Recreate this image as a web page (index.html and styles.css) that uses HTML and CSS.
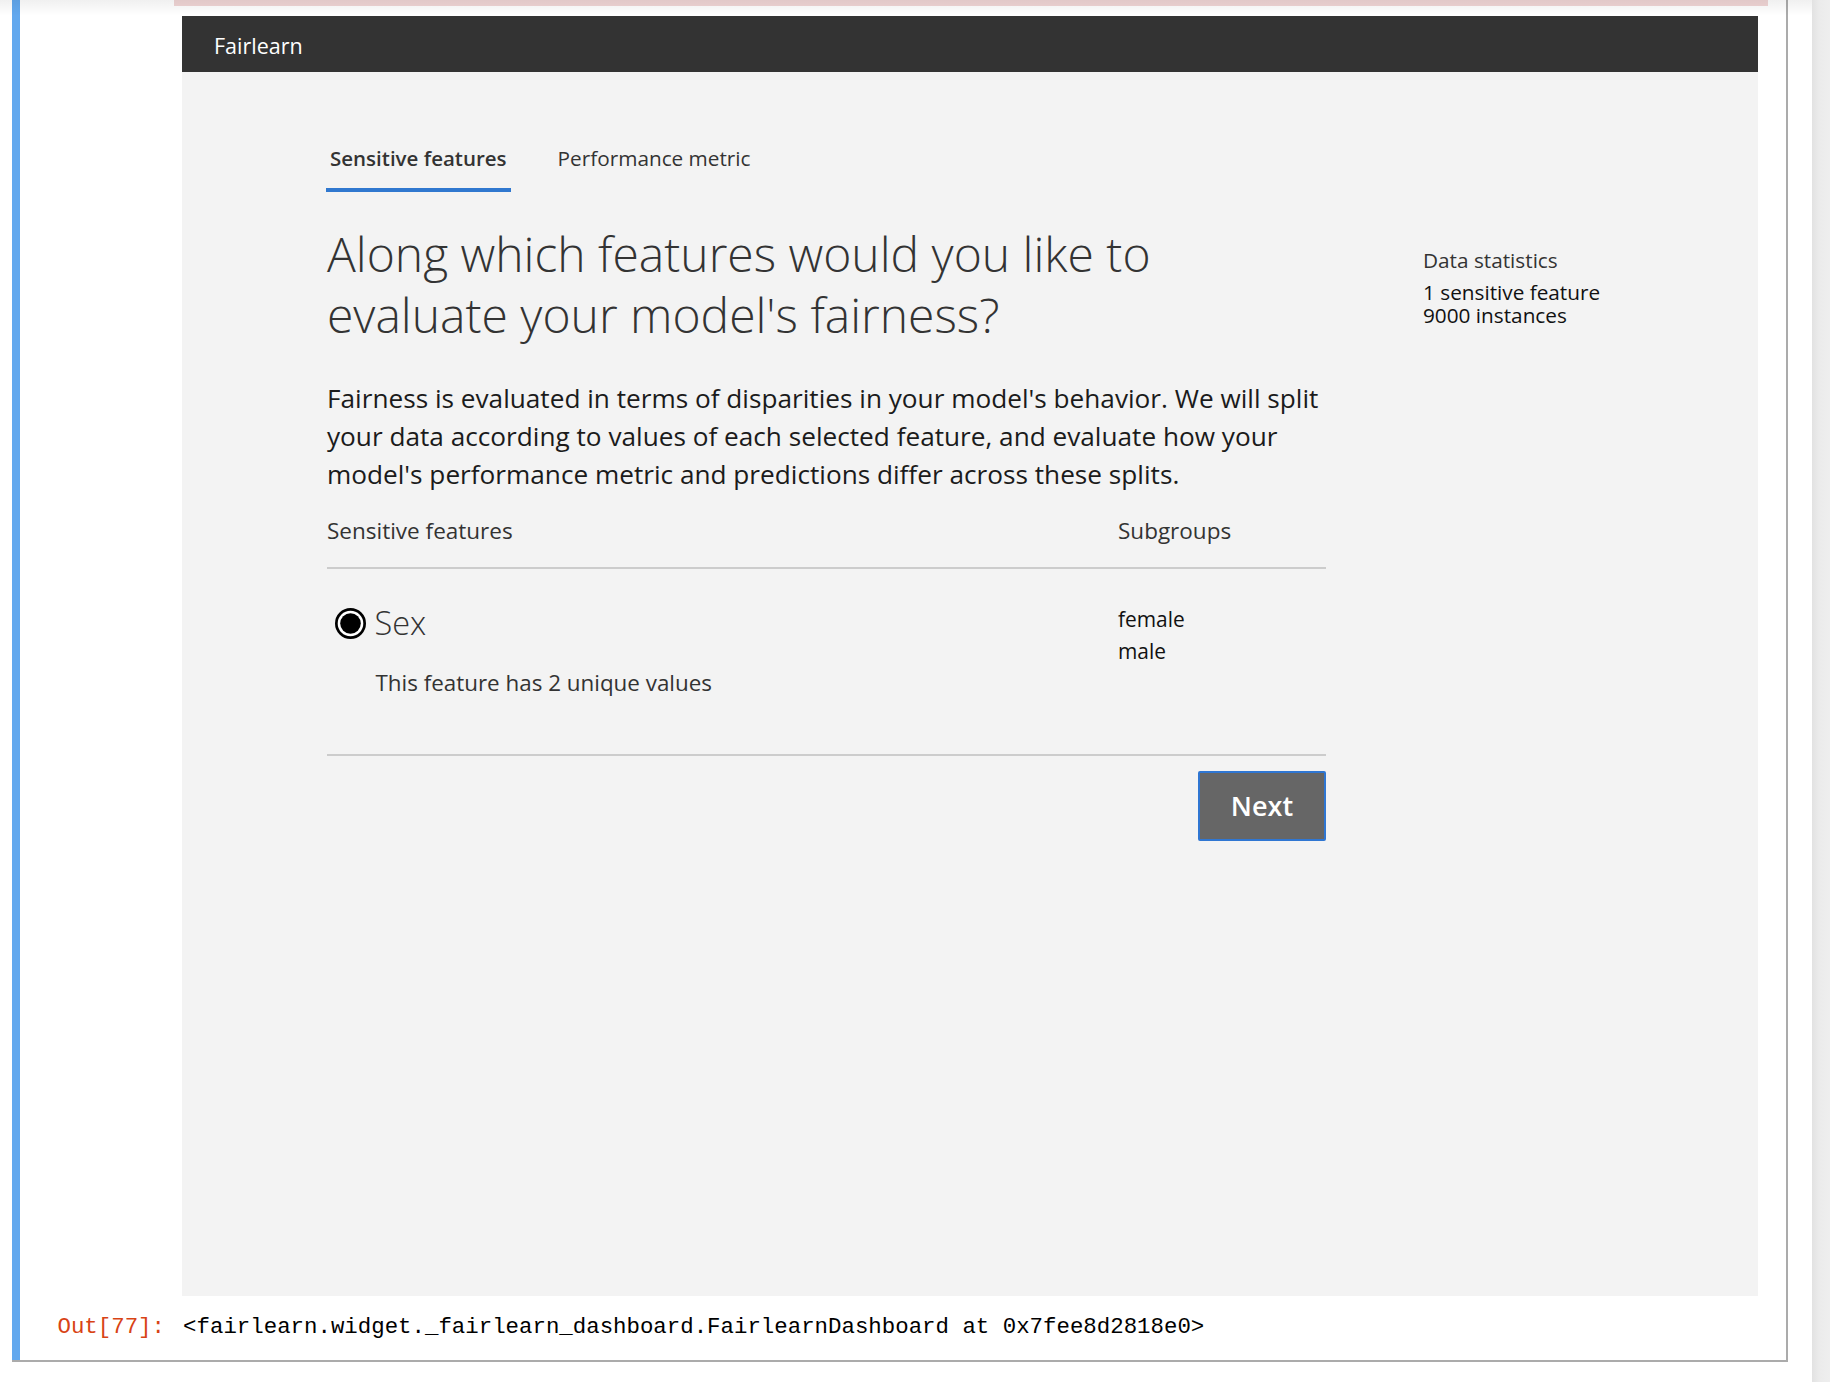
FILE: index.html
```html
<!DOCTYPE html>
<html lang="en">
<head>
<meta charset="utf-8">
<title>Fairlearn dashboard</title>
<link rel="stylesheet" href="styles.css">
</head>
<body>
<div class="topshade"></div>
<div class="page">
  <div class="cell">
    <div class="stderr"></div>
    <div class="widget">
      <div class="appbar">Fairlearn</div>
      <div class="panel">
        <div class="tabs">
          <div class="tab active">Sensitive features</div>
          <div class="tab">Performance metric</div>
        </div>
        <div class="body">
          <div class="main">
            <h1 class="title">Along which features would you like to evaluate your model's fairness?</h1>
            <p class="desc">Fairness is evaluated in terms of disparities in your model's behavior. We will split your data according to values of each selected feature, and evaluate how your model's performance metric and predictions differ across these splits.</p>
            <div class="table-head">
              <span>Sensitive features</span>
              <span>Subgroups</span>
            </div>
            <div class="row">
              <div class="feat">
                <div class="radio-line">
                  <svg class="radio" width="31" height="31" viewBox="0 0 31 31" aria-hidden="true">
                    <circle cx="15.5" cy="15.5" r="14.15" fill="#ffffff" stroke="#000000" stroke-width="2.7"/>
                    <circle cx="15.5" cy="15.5" r="10.3" fill="#000000"/>
                  </svg>
                  <span class="feat-name">Sex</span>
                </div>
                <div class="uniq">This feature has 2 unique values</div>
              </div>
              <div class="groups">
                <div>female</div>
                <div>male</div>
              </div>
            </div>
            <div class="actions">
              <button class="next" type="button">Next</button>
            </div>
          </div>
          <aside class="stats">
            <div class="stats-title">Data statistics</div>
            <div class="stats-line">1 sensitive feature</div>
            <div class="stats-line">9000 instances</div>
          </aside>
        </div>
      </div>
    </div>
    <div class="out">
      <div class="prompt">Out[77]:</div>
      <div class="out-text">&lt;fairlearn.widget._fairlearn_dashboard.FairlearnDashboard at 0x7fee8d2818e0&gt;</div>
    </div>
  </div>
</div>
<div class="scrollbar"></div>
</body>
</html>
```
FILE: styles.css
```css
html, body {
  margin: 0;
  padding: 0;
}
body {
  display: flex;
  width: 1830px;
  height: 1382px;
  overflow: hidden;
  background: #ffffff;
  font-family: "Open Sans", "Noto Sans", sans-serif;
  position: relative;
}
.topshade {
  position: absolute;
  top: 0;
  left: 0;
  width: 1812px;
  height: 16px;
  background: linear-gradient(rgba(0, 0, 0, 0.06), rgba(0, 0, 0, 0));
  pointer-events: none;
  z-index: 2;
}
.page {
  width: 1812px;
  flex: none;
}
.scrollbar {
  width: 18px;
  height: 1382px;
  flex: none;
  background: linear-gradient(to right, #e2e2e2, #ebebeb 40%, #eeeeee);
}
.cell {
  margin-left: 12px;
  width: 1776px;
  box-sizing: border-box;
  border-right: 2px solid #ababab;
  border-bottom: 2px solid #ababab;
  box-shadow: inset 8px 0 0 #62a8ee;
  padding-bottom: 20px;
}
.stderr {
  margin-left: 162px;
  width: 1594px;
  height: 6px;
  background: #f0d5d5;
}
.widget {
  margin: 10px 0 0 170px;
  width: 1576px;
}
.appbar {
  height: 56px;
  background: #333333;
  color: #ffffff;
  font-size: 21.5px;
  font-weight: 400;
  line-height: 60px;
  padding-left: 32px;
  overflow: hidden;
}
.panel {
  height: 1224px;
  box-sizing: border-box;
  background: #f3f3f3;
  padding: 66px 0 0 145px;
}
.tabs {
  display: flex;
  gap: 43px;
  margin-left: -1px;
}
.tab {
  font-size: 20.75px;
  line-height: 40px;
  color: #333333;
  padding: 0 4px 10px;
  border-bottom: 4px solid transparent;
}
.tab.active {
  font-size: 20.5px;
  font-weight: 600;
  border-bottom-color: #3078cf;
}
.body {
  display: flex;
}
.main {
  width: 999px;
  flex: none;
}
.title {
  max-width: 960px;
  margin: 30.5px 0 0;
  font-size: 48px;
  font-weight: 300;
  line-height: 61px;
  color: #333333;
}
.desc {
  margin: 34.5px 0 0;
  font-size: 26.2px;
  line-height: 38px;
  color: #1b1b1b;
}
.table-head {
  margin-top: 22.5px;
  display: grid;
  grid-template-columns: 791px 1fr;
  font-size: 22.5px;
  line-height: 30px;
  color: #333333;
  padding-bottom: 21.5px;
  border-bottom: 2px solid #cccccc;
}
.row {
  display: grid;
  grid-template-columns: 791px 1fr;
  border-bottom: 2px solid #cccccc;
}
.feat {
  padding: 34.3px 0 55.7px;
}
.radio-line {
  display: flex;
  align-items: center;
  height: 40px;
}
.radio {
  margin-left: 8px;
  margin-right: 8.5px;
  flex: none;
}
.feat-name {
  font-size: 32.5px;
  font-weight: 300;
  line-height: 40px;
  color: #333333;
}
.uniq {
  margin: 25px 0 0 48.5px;
  font-size: 22.4px;
  line-height: 30px;
  color: #333333;
}
.groups {
  padding-top: 33.6px;
  font-size: 20.9px;
  line-height: 32px;
  color: #111111;
}
.actions {
  display: flex;
  justify-content: flex-end;
  margin-top: 15px;
}
.next {
  width: 128px;
  height: 70px;
  box-sizing: border-box;
  padding: 0;
  background: #666666;
  border: 2px solid #2f76d2;
  border-radius: 2px;
  color: #ffffff;
  font-family: "Open Sans", "Noto Sans", sans-serif;
  font-size: 27px;
  font-weight: 600;
}
.stats {
  margin-left: 97px;
  padding-top: 57px;
}
.stats-title {
  font-size: 20.75px;
  line-height: 23px;
  color: #333333;
  margin-bottom: 9px;
}
.stats-line {
  font-size: 20.75px;
  line-height: 23px;
  color: #111111;
}
.out {
  display: flex;
  margin-top: 18px;
  font-family: "Liberation Mono", monospace;
  font-size: 22.4px;
  line-height: 26px;
}
.prompt {
  width: 153px;
  flex: none;
  text-align: right;
  color: #d84315;
}
.out-text {
  margin-left: 18.1px;
  color: #000000;
  white-space: nowrap;
}
```
